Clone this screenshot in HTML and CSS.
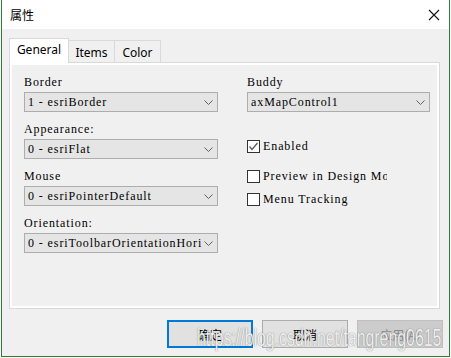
FILE: index.html
```html
<!DOCTYPE html>
<html lang="zh-CN">
  <head>
    <meta charset="UTF-8" />
    <title>属性</title>
    <link rel="stylesheet" href="styles.css">
  </head>
  <body>
    <div class="window">
      <!-- title bar -->
      <div class="titlebar">
        <span class="title">属性</span>
        <svg class="close" width="12" height="12" viewBox="0 0 12 12">
          <path d="M1 1 L11 11 M11 1 L1 11" stroke="#111" stroke-width="1.1" fill="none" />
        </svg>
      </div>

      <div class="content">
        <!-- tabs -->
        <div class="tabs">
          <div class="tab active">General</div>
          <div class="tab">Items</div>
          <div class="tab">Color</div>
        </div>

        <div class="panel">
          <div class="col col-left">
            <div class="field">
              <div class="label">Border</div>
              <div class="select"><span>1 - esriBorder</span><svg width="9" height="5" viewBox="0 0 9 5"><path d="M0.5 0.5 L4.5 4.5 L8.5 0.5" stroke="#606060" fill="none" /></svg></div>
            </div>
            <div class="field">
              <div class="label">Appearance:</div>
              <div class="select"><span>0 - esriFlat</span><svg width="9" height="5" viewBox="0 0 9 5"><path d="M0.5 0.5 L4.5 4.5 L8.5 0.5" stroke="#606060" fill="none" /></svg></div>
            </div>
            <div class="field">
              <div class="label">Mouse</div>
              <div class="select"><span>0 - esriPointerDefault</span><svg width="9" height="5" viewBox="0 0 9 5"><path d="M0.5 0.5 L4.5 4.5 L8.5 0.5" stroke="#606060" fill="none" /></svg></div>
            </div>
            <div class="field">
              <div class="label">Orientation:</div>
              <div class="select"><span>0 - esriToolbarOrientationHorizontal</span><svg width="9" height="5" viewBox="0 0 9 5"><path d="M0.5 0.5 L4.5 4.5 L8.5 0.5" stroke="#606060" fill="none" /></svg></div>
            </div>
          </div>

          <div class="col col-right">
            <div class="field">
              <div class="label">Buddy</div>
              <div class="select"><span>axMapControl1</span><svg width="9" height="5" viewBox="0 0 9 5"><path d="M0.5 0.5 L4.5 4.5 L8.5 0.5" stroke="#606060" fill="none" /></svg></div>
            </div>
            <div class="check check-enabled">
              <span class="box"><svg width="11" height="11" viewBox="0 0 11 11"><path d="M1.5 5.5 L4 8.5 L9.5 2" stroke="#555" stroke-width="1.2" fill="none" /></svg></span>
              <span class="check-text">Enabled</span>
            </div>
            <div class="check check-preview">
              <span class="box"></span>
              <span class="check-text">Preview in Design Mode</span>
            </div>
            <div class="check check-menu">
              <span class="box"></span>
              <span class="check-text">Menu Tracking</span>
            </div>
          </div>
        </div>

        <div class="buttons">
          <button class="btn default">确定</button>
          <button class="btn">取消</button>
          <button class="btn disabled">应用(A)</button>
        </div>
      </div>

      <div class="watermark">https://blog.csdn.net/tangreng0615</div>
    </div>
  </body>
</html>
```

FILE: styles.css
```css
body {
  margin: 0;
  background: #fff;
}

.window {
  position: relative;
  width: 447px;
  height: 356px;
  margin-left: 1px;
  border: 1px solid #2f7d32;
  border-top: none;
  background: #f0f0f0;
  overflow: hidden;
  font-family: "Noto Sans", "Noto Sans CJK SC", sans-serif;
}

.titlebar {
  height: 29px;
  background: #fff;
  display: flex;
  align-items: center;
  justify-content: space-between;
  padding: 0 9px 0 8px;
}

.title {
  font-family: "Noto Sans CJK SC", sans-serif;
  font-size: 12px;
  color: #000;
}

.close {
  display: block;
}

.content {
  padding: 9px 0 0 7px;
}

.tabs {
  display: flex;
  align-items: flex-end;
  height: 25px;
  margin-bottom: -1px;
  position: relative;
  z-index: 1;
}

.tab {
  box-sizing: border-box;
  height: 23px;
  width: 46px;
  border: 1px solid #d9d9d9;
  border-left: none;
  background: #f0f0f0;
  font-size: 12px;
  line-height: 23px;
  text-align: center;
  color: #000;
}

.tab.active {
  height: 25px;
  width: 60px;
  border-left: 1px solid #d9d9d9;
  border-bottom: none;
  background: #fff;
  line-height: 21px;
}

.panel {
  box-sizing: border-box;
  width: 431px;
  height: 247px;
  border: 1px solid #d9d9d9;
  box-shadow: inset 0 0 0 2px #fff;
  background: #f0f0f0;
  padding: 12px 0 0 14px;
  display: flex;
  gap: 29px;
}

.col {
  display: flex;
  flex-direction: column;
}

.col-left {
  width: 194px;
  gap: 10px;
}

.col-right {
  width: 183px;
}

.label,
.select,
.check-text {
  font-family: "Liberation Serif", serif;
  font-size: 12px;
  letter-spacing: 0.9px;
  color: #000;
}

.label {
  height: 14px;
  line-height: 14px;
  margin-bottom: 3px;
}

.select {
  box-sizing: border-box;
  height: 20px;
  border: 1px solid #adadad;
  background: #e5e5e5;
  display: flex;
  align-items: center;
  justify-content: space-between;
  padding: 0 4px 0 3px;
}

.select span {
  white-space: nowrap;
  overflow: hidden;
  flex: 1;
  line-height: 18px;
}

.select svg {
  flex: none;
  margin-left: 2px;
}

.check {
  display: flex;
  align-items: center;
  height: 13px;
  gap: 3px;
}

.check-enabled {
  margin-top: 28px;
}

.check-preview {
  margin-top: 17px;
}

.check-menu {
  margin-top: 10px;
}

.box {
  box-sizing: border-box;
  width: 13px;
  height: 13px;
  border: 1px solid #333;
  background: #fff;
  display: flex;
  align-items: center;
  justify-content: center;
}

.check-text {
  line-height: 13px;
  white-space: nowrap;
  overflow: hidden;
  width: 124px;
}

.buttons {
  display: flex;
  justify-content: flex-end;
  gap: 9px;
  padding: 11px 6px 0 0;
}

.btn {
  box-sizing: border-box;
  width: 86px;
  height: 28px;
  border: 1px solid #adadad;
  background: #e1e1e1;
  font-family: "Noto Sans CJK SC", sans-serif;
  font-size: 12px;
  color: #000;
  padding: 0;
}

.btn.default {
  border: 2px solid #0078d7;
}

.btn.disabled {
  background: #cccccc;
  border-color: #bfbfbf;
  color: #8a8a8a;
}

.watermark {
  position: absolute;
  left: 195px;
  top: 327px;
  font-family: "Liberation Sans", Arial, sans-serif;
  font-size: 23px;
  line-height: 23px;
  white-space: nowrap;
  color: rgba(255, 255, 255, 0.9);
  text-shadow: 0 0 1px rgba(60, 60, 60, 0.6), 0 0 2px rgba(120, 120, 120, 0.3);
  transform: scaleX(0.69);
  transform-origin: left top;
  pointer-events: none;
}
```
